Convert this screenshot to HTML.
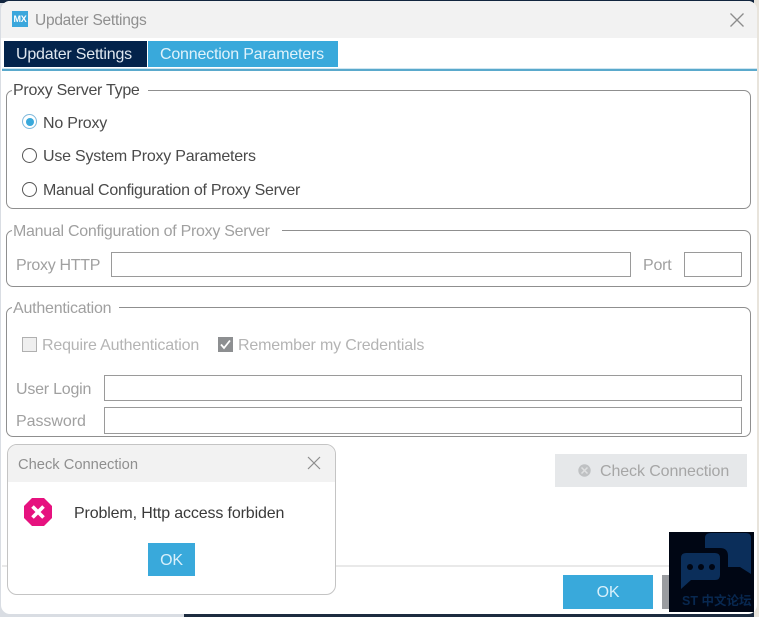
<!DOCTYPE html>
<html>
<head>
<meta charset="utf-8">
<style>
html,body{margin:0;padding:0;}
body{width:759px;height:617px;overflow:hidden;position:relative;background:#d9dde3;font-family:"Liberation Sans",Arial,sans-serif;font-size:16px;letter-spacing:-.22px;color:#4a4a4a;}
.a{position:absolute;white-space:nowrap;}
.box{position:absolute;border:1px solid #8f8f8f;border-radius:7px;box-sizing:border-box;}
.leg{position:absolute;background:#fff;white-space:nowrap;padding:0 8px 0 1px;line-height:18px;}
.inp{position:absolute;border:1px solid #9a9a9a;box-sizing:border-box;background:#fff;}
.dis{color:#a0a0a0;}
.radio{position:absolute;width:15px;height:15px;border:1.500px solid #555;border-radius:50%;box-sizing:border-box;background:#fff;}
</style>
</head>
<body>
<!-- backdrop edges -->
<div class="a" style="left:0;top:0;width:759px;height:3px;background:#12263f;"></div>
<div class="a" style="left:184px;top:610px;width:575px;height:7px;background:#1c2b3f;"></div>
<div class="a" style="left:754px;top:0;width:5px;height:617px;background:#e8e4dc;"></div>
<!-- window -->
<div class="a" style="left:1px;top:1px;width:756px;height:613px;background:#fff;border-radius:9px;overflow:hidden;">
  <div class="a" style="left:0;top:0;width:756px;height:37px;background:#f2f2f2;"></div>
</div>
<!-- title -->
<div class="a" style="left:12px;top:11px;width:16px;height:16px;background:#3ba7dc;color:#fff;font-size:9px;font-weight:bold;line-height:16px;text-align:center;letter-spacing:-.3px;">MX</div>
<div class="a" style="left:35px;top:10.500px;line-height:19px;font-size:15.500px;letter-spacing:-.25px;color:#8f8f8f;">Updater Settings</div>
<svg class="a" style="left:729px;top:12px;" width="16" height="16" viewBox="0 0 16 16"><path d="M1.500 1.500L14.500 14.500M14.500 1.500L1.500 14.500" stroke="#8c8c8c" stroke-width="1.300" fill="none"/></svg>
<!-- tabs -->
<div class="a" style="left:4px;top:41px;width:131px;height:26px;padding-left:12px;background:#03234b;color:#dfe7ef;line-height:28.500px;letter-spacing:-.2px;">Updater Settings</div>
<div class="a" style="left:148px;top:41px;width:178px;height:26px;padding-left:12px;background:#39a9db;color:#dff2fb;line-height:28.500px;letter-spacing:-.2px;">Connection Parameters</div>
<div class="a" style="left:2px;top:68px;width:755px;height:1px;background:#cfe6f1;"></div>
<div class="a" style="left:2px;top:69px;width:755px;height:2px;background:#5aa9cc;"></div>

<!-- Proxy Server Type -->
<div class="box" style="left:6px;top:90px;width:745px;height:119px;"></div>
<div class="leg" style="left:12px;top:84px;height:14px;line-height:14px;letter-spacing:-.28px;">Proxy Server Type</div>
<div class="radio" style="left:22px;top:114px;border-color:#7fb9dc;"></div>
<div class="a" style="left:25.500px;top:117.500px;width:8px;height:8px;border-radius:50%;background:#39a9db;"></div>
<div class="a" style="left:43px;top:115px;line-height:18px;">No Proxy</div>
<div class="radio" style="left:22px;top:148px;"></div>
<div class="a" style="left:43px;top:148px;line-height:18px;">Use System Proxy Parameters</div>
<div class="radio" style="left:22px;top:182px;"></div>
<div class="a" style="left:43px;top:182px;line-height:18px;letter-spacing:-.27px;">Manual Configuration of Proxy Server</div>

<!-- Manual -->
<div class="box" style="left:6px;top:230px;width:745px;height:57px;"></div>
<div class="leg dis" style="left:12px;top:224.500px;height:14px;line-height:14px;padding-right:12px;letter-spacing:-.28px;">Manual Configuration of Proxy Server</div>
<div class="a dis" style="left:16px;top:257px;line-height:18px;letter-spacing:-.3px;">Proxy HTTP</div>
<div class="inp" style="left:111px;top:252px;width:520px;height:25px;"></div>
<div class="a dis" style="left:643px;top:257px;line-height:18px;">Port</div>
<div class="inp" style="left:684px;top:252px;width:58px;height:25px;"></div>

<!-- Authentication -->
<div class="box" style="left:6px;top:307px;width:745px;height:130px;"></div>
<div class="leg dis" style="left:12px;top:302px;height:14px;line-height:14px;">Authentication</div>
<div class="a" style="left:22px;top:337px;width:15px;height:15px;box-sizing:border-box;border:1px solid #b0b0b0;background:#efefef;"></div>
<div class="a" style="left:42px;top:337px;line-height:18px;color:#b4b4b4;letter-spacing:-.18px;">Require Authentication</div>
<svg class="a" style="left:218px;top:337px;" width="15" height="15" viewBox="0 0 15 15"><rect width="15" height="15" fill="#8d8f91"/><path d="M3 7.500L6 11L12 3.500" stroke="#fff" stroke-width="1.800" fill="none"/></svg>
<div class="a" style="left:238px;top:337px;line-height:18px;color:#b4b4b4;letter-spacing:-.18px;">Remember my Credentials</div>
<div class="a dis" style="left:16px;top:381px;line-height:18px;">User Login</div>
<div class="inp" style="left:104px;top:375px;width:638px;height:26px;"></div>
<div class="a dis" style="left:16px;top:413px;line-height:18px;letter-spacing:-.05px;">Password</div>
<div class="inp" style="left:104px;top:407px;width:638px;height:27px;"></div>

<!-- Check connection button -->
<div class="a" style="left:555px;top:454px;width:192px;height:33px;background:#e6e8ea;"></div>
<svg class="a" style="left:578px;top:464px;" width="13" height="13" viewBox="0 0 13 13"><circle cx="6.500" cy="6.500" r="6.200" fill="#bfc1c3"/><path d="M3.500 3.500L9.500 9.500M9.500 3.500L3.500 9.500" stroke="#dfe0e1" stroke-width="1.500"/></svg>
<div class="a" style="left:600px;top:463px;line-height:18px;letter-spacing:-.1px;color:#a6a6a6;">Check Connection</div>

<!-- footer -->
<div class="a" style="left:2px;top:565px;width:752px;height:2px;background:#e9e9e9;"></div>
<div class="a" style="left:563px;top:575px;width:90px;height:34px;background:#39a9db;color:#d8f0fb;line-height:36px;text-align:center;">OK</div>
<div class="a" style="left:662px;top:575px;width:20px;height:34px;background:#9a9ca0;"></div>

<!-- dialog -->
<div class="a" style="left:7px;top:444px;width:329px;height:151px;box-sizing:border-box;background:#fff;border:1px solid #c4c4c4;border-radius:10px;overflow:hidden;">
  <div style="height:37px;background:#f2f2f2;"></div>
</div>
<div class="a" style="left:18px;top:456px;line-height:18px;font-size:14.700px;letter-spacing:0;color:#8f8f8f;">Check Connection</div>
<svg class="a" style="left:307px;top:456px;" width="14" height="14" viewBox="0 0 14 14"><path d="M1 1L13 13M13 1L1 13" stroke="#8c8c8c" stroke-width="1.200" fill="none"/></svg>
<svg class="a" style="left:24px;top:498px;" width="28" height="28" viewBox="0 0 28 28"><path d="M8 0H20L28 8V20L20 28H8L0 20V8Z" fill="#e6127f"/><path d="M8.500 8.500L19.500 19.500M19.500 8.500L8.500 19.500" stroke="#fff" stroke-width="3.600"/></svg>
<div class="a" style="left:74px;top:505px;line-height:18px;letter-spacing:-.14px;color:#3a3a3a;">Problem, Http access forbiden</div>
<div class="a" style="left:148px;top:543px;width:47px;height:33px;background:#39a9db;color:#d8f0fb;line-height:35px;text-align:center;">OK</div>

<!-- watermark -->
<div class="a" style="left:669px;top:532px;width:85px;height:80px;background:#000614;overflow:hidden;">
  <svg class="a" style="left:0;top:0;" width="85" height="80" viewBox="0 0 85 80">
    <path d="M36 6Q36 1 42 1H77Q82 1 82 6V42L71 35H59V24Q59 16 51 16H36Z" fill="#0b2e5a"/>
    <path d="M17 21H46Q51 21 51 26V43Q51 48 46 48H22L12 57V26Q12 21 17 21Z" fill="#0b2e5a"/>
    <circle cx="21" cy="35" r="3" fill="#000614"/>
    <circle cx="32" cy="35" r="3" fill="#000614"/>
    <circle cx="43" cy="35" r="3" fill="#000614"/>
  </svg>
  <div class="a" style="left:13px;top:62px;font-size:12.500px;letter-spacing:0;line-height:15px;font-weight:bold;color:#082850;font-family:'Liberation Sans','Noto Sans CJK SC',sans-serif;">ST 中文论坛</div>
</div>
</body>
</html>
